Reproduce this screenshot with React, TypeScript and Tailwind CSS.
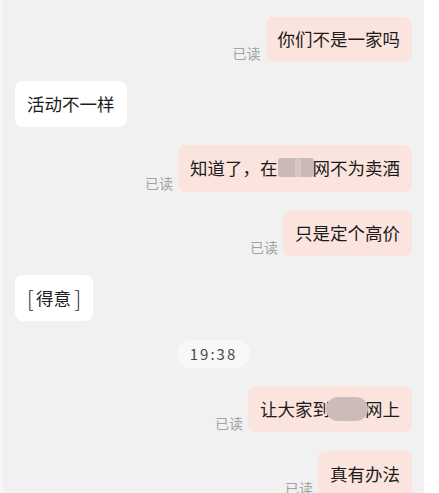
import React from 'react'

const font = { fontFamily: '"Noto Sans CJK SC", "Noto Sans", sans-serif' }

const Blur = ({ shift = 0, round = false }: { shift?: number; round?: boolean }) => (
  <span className="relative inline-block w-[35px] h-[1em] align-middle">
    <span
      className={
        round
          ? 'absolute top-[-3px] h-[24px] w-[42px] rounded-full bg-[#cbbcb8]'
          : 'absolute top-[-2px] h-[19px] w-[36px] rounded-[3px] bg-[#c9bab7]'
      }
      style={{ left: shift }}
    />
    {!round && <span className="absolute left-[17px] top-[-2px] h-[19px] w-[6px] bg-[#d3c6c3]" />}
  </span>
)

const Mine = ({ children, mt, h = 'h-[46px]' }: { children: React.ReactNode; mt: string; h?: string }) => (
  <div className={`flex items-end justify-end gap-[5px] ${mt}`}>
    <span className="text-[14px] leading-none mb-[2px] text-[#a3a3a3]">已读</span>
    <div className={`flex items-center ${h} px-[12px] rounded-[8px] bg-[#fbe4dd] text-[17.5px] text-[#1b1b1b] whitespace-nowrap`}>
      {children}
    </div>
  </div>
)

const Theirs = ({ children, mt }: { children: React.ReactNode; mt: string }) => (
  <div className={`flex ${mt}`}>
    <div className="flex items-center h-[46px] px-[12px] rounded-[8px] bg-white text-[17.5px] text-[#1b1b1b] whitespace-nowrap">
      {children}
    </div>
  </div>
)

export default function App() {
  return (
    <div className="flex w-[439px] h-[493px] overflow-hidden bg-white" style={font}>
      <div className="w-[424px] h-full bg-[#f1f1f1] border-l-[3px] border-[#f6f6f6] pl-[12px] pr-[12px] flex flex-col">
        <Mine mt="mt-[17px]" h="h-[45px]">你们不是一家吗</Mine>
        <Theirs mt="mt-[19px]">活动不一样</Theirs>
        <Mine mt="mt-[18px]" h="h-[47px]">
          知道了，在<Blur />网不为卖酒
        </Mine>
        <Mine mt="mt-[18px]">只是定个高价</Mine>
        <Theirs mt="mt-[19px]">
          <span className="inline-block w-[9px] text-[21px] font-light leading-none">[</span>
          得意
          <span className="inline-block w-[10px] text-right text-[21px] font-light leading-none">]</span>
        </Theirs>
        <div className="flex justify-center mt-[19px]">
          <div className="h-[28px] px-[13px] flex items-center rounded-full bg-[#f8f8f8] text-[15px] tracking-[2px] text-[#4a4a4a]">
            19:38
          </div>
        </div>
        <Mine mt="mt-[18px]">
          让大家到<Blur shift={-4} round />网上
        </Mine>
        <Mine mt="mt-[19px]">真有办法</Mine>
      </div>
    </div>
  )
}
